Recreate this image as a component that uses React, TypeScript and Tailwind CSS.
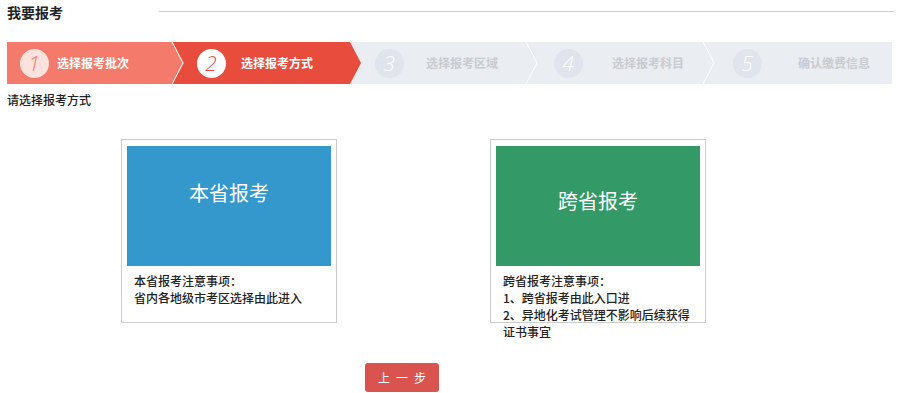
import React from "react";

type Step = {
  n: number;
  label: string;
  circle: string;
  text: string;
  bg: string;
  cml: string;
  tml: string;
  z: string;
  bgLeft: string;
  line: boolean;
};

const steps: Step[] = [
  { n: 1, label: "选择报考批次", circle: "bg-[#fde1dd] text-[#f27b6c]", text: "text-white", bg: "bg-[#f47a6b]", cml: "ml-[13px]", tml: "ml-[8px]", z: "z-[5]", bgLeft: "left-0", line: true },
  { n: 2, label: "选择报考方式", circle: "bg-white text-[#e84c3d]", text: "text-white", bg: "bg-[#e84c3d]", cml: "ml-[13px]", tml: "ml-[15px]", z: "z-[4]", bgLeft: "left-[-12px]", line: false },
  { n: 3, label: "选择报考区域", circle: "bg-[#dfe4ed] text-white", text: "text-[#c8cbd1]", bg: "", cml: "ml-[14px]", tml: "ml-[22px]", z: "z-[3]", bgLeft: "left-0", line: true },
  { n: 4, label: "选择报考科目", circle: "bg-[#dfe4ed] text-white", text: "text-[#c8cbd1]", bg: "", cml: "ml-[16px]", tml: "ml-[29px]", z: "z-[2]", bgLeft: "left-0", line: true },
  { n: 5, label: "确认缴费信息", circle: "bg-[#dfe4ed] text-white", text: "text-[#c8cbd1]", bg: "", cml: "ml-[18px]", tml: "ml-[36px]", z: "z-[1]", bgLeft: "left-0", line: false },
];

function StepItem({ s }: { s: Step }) {
  return (
    <div className={`relative flex-1 h-full flex items-center ${s.z}`}>
      {s.bg && (
        <div
          className={`absolute inset-y-0 right-0 ${s.bgLeft} ${s.bg} [clip-path:polygon(0_0,calc(100%_-_11px)_0,100%_50%,calc(100%_-_11px)_100%,0_100%)]`}
        />
      )}
      {s.line && (
        <svg className="absolute right-0 top-0 h-[42px] w-[12px]" viewBox="0 0 12 42">
          <polyline points="0,0 11,21 0,42" fill="none" stroke="#ffffff" strokeWidth="1" />
        </svg>
      )}
      <div
        className={`relative ${s.cml} w-[29px] h-[29px] rounded-full flex items-center justify-center ${s.circle}`}
      >
        <span className="italic text-[21px] leading-none font-['Open_Sans',sans-serif] font-light pr-[1px]">
          {s.n}
        </span>
      </div>
      <span className={`relative ${s.tml} text-[12px] font-bold leading-none ${s.text}`}>{s.label}</span>
    </div>
  );
}

export default function App() {
  return (
    <div className="w-[899px] h-[393px] bg-white text-[#333] font-['Microsoft_YaHei','Noto_Sans_CJK_SC',sans-serif] px-[7px] overflow-hidden">
      <div className="h-[24px] flex items-center">
        <span className="text-[14px] font-bold leading-none text-[#222]">我要报考</span>
        <div className="flex-1 ml-[96px] -mr-[2px] h-px bg-[#cfcfcf] -mt-[2px]" />
      </div>

      <div className="mt-[18px] h-[42px] flex bg-[#eaedf2]">
        {steps.map((s) => (
          <StepItem key={s.n} s={s} />
        ))}
      </div>

      <div className="mt-[8px] text-[12px] leading-[16px] font-medium text-[#222]">请选择报考方式</div>

      <div className="mt-[31px] flex items-start">
        <div className="ml-[114px] w-[216px] h-[184px] border border-[#cccccc] pt-[6px] px-[5px]">
          <div className="w-[204px] h-[120px] bg-[#3498cc] flex justify-center pt-[34px]">
            <span className="text-white text-[20px] leading-[26px]">本省报考</span>
          </div>
          <div className="mt-[6px] pl-[7px] text-[12px] leading-[17px] font-medium text-[#222]">
            <div>本省报考注意事项：</div>
            <div>省内各地级市考区选择由此进入</div>
          </div>
        </div>

        <div className="ml-[153px] w-[216px] h-[184px] border border-[#cccccc] pt-[6px] px-[5px]">
          <div className="w-[204px] h-[120px] bg-[#339966] flex justify-center pt-[42px]">
            <span className="text-white text-[20px] leading-[26px]">跨省报考</span>
          </div>
          <div className="mt-[6px] pl-[7px] w-[203px] text-[12px] leading-[17px] font-medium text-[#222]">
            <div>跨省报考注意事项：</div>
            <div>1、跨省报考由此入口进</div>
            <div>2、异地化考试管理不影响后续获得证书事宜</div>
          </div>
        </div>
      </div>

      <div className="mt-[40px] ml-[358px]">
        <button className="w-[74px] h-[29px] rounded-[3px] bg-[#d9534f] text-white text-[12px] leading-none tracking-[6px] pl-[6px]">
          上一步
        </button>
      </div>
    </div>
  );
}
